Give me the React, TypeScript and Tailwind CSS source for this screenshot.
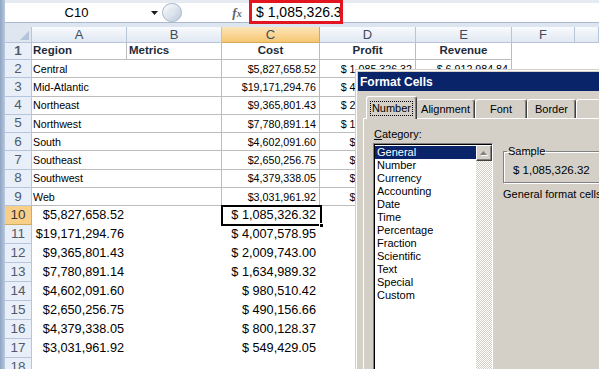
import React from 'react';

const rows = [
  ['Central', '$5,827,658.52', '$ 1,085,326.32', '$ 6,912,984.84'],
  ['Mid-Atlantic', '$19,171,294.76', '$ 4,007,578.95', '$ 23,178,873.71'],
  ['Northeast', '$9,365,801.43', '$ 2,009,743.00', '$ 11,375,544.43'],
  ['Northwest', '$7,780,891.14', '$ 1,634,989.32', '$ 9,415,880.46'],
  ['South', '$4,602,091.60', '$ 980,510.42', '$ 5,582,602.02'],
  ['Southeast', '$2,650,256.75', '$ 490,156.66', '$ 3,140,413.41'],
  ['Southwest', '$4,379,338.05', '$ 800,128.37', '$ 5,179,466.42'],
  ['Web', '$3,031,961.92', '$ 549,429.05', '$ 3,581,390.97'],
];

const categories = [
  'General', 'Number', 'Currency', 'Accounting', 'Date', 'Time',
  'Percentage', 'Fraction', 'Scientific', 'Text', 'Special', 'Custom',
];

const colHead = 'flex items-center justify-center border-r border-b border-[#b6c5d9] bg-linear-to-b from-[#f8fafd] to-[#e1e8f2] text-[13px] text-[#3d4b61]';
const colHeadOn = 'flex items-center justify-center border-r border-b border-[#d3a95c] bg-linear-to-b from-[#fce5b8] to-[#f6c772] text-[13px] text-[#3d4b61]';

function RowNum({ n, active }: { n: number; active?: boolean }) {
  return (
    <div
      className={
        active
          ? 'w-[27px] shrink-0 flex items-center justify-center border-r border-b border-[#d3a95c] bg-[#f8cf88] text-[13.5px] text-[#3a3a3a]'
          : 'w-[27px] shrink-0 flex items-center justify-center border-r border-b border-[#b6c5d9] bg-[#e9eff8] text-[13.5px] text-[#4f5b6c]'
      }
    >
      {n}
    </div>
  );
}

function FormulaBar() {
  return (
    <div className="h-[27px] flex flex-col shrink-0">
      <div className="h-[3px] bg-[#e6ebf2]" />
      <div className="h-[19px] bg-white flex items-center">
        <div className="w-[143px] text-center text-[13px] text-black">C10</div>
        <div className="w-[12px] flex justify-center">
          <svg width="7" height="4" viewBox="0 0 7 4">
            <polygon points="0,0 7,0 3.5,4" fill="#1b1b1b" />
          </svg>
        </div>
        <div className="ml-[2px] w-[20px] h-[19px] rounded-full border border-[#a7b6ca] bg-linear-to-br from-white to-[#bccadb] flex items-center justify-center">
          <div className="w-[6px] h-[6px] rounded-full bg-[#dfe6ef]" />
        </div>
        <div className="w-[47px]" />
        <div className="w-[16px] text-center font-['Liberation_Serif',serif] italic font-bold text-[13px] text-[#5c6270]">
          f<span className="text-[10px]">x</span>
        </div>
        <div className="w-[4px]" />
        <div className="relative z-10 -mt-[3px] self-start w-[94px] h-[24px] border-[3px] border-[#e3151f] bg-white overflow-hidden whitespace-nowrap pl-[4px] text-[14px] leading-[18px] text-black">
          $ 1,085,326.32
        </div>
        <div className="flex-1" />
      </div>
      <div className="h-[5px] border-t border-[#a9b8cc] bg-[#dce5f0]" />
    </div>
  );
}

function FormatCells() {
  return (
    <div className="absolute left-[355px] top-[69px] w-[260px] h-[320px] border border-[#d4d0c8] bg-[#d4d0c8] text-[11px] text-black">
      <div className="h-full border-l border-t border-white p-px flex flex-col">
        <div className="h-[19px] bg-[#0a246a] pl-[2px] flex items-center text-white font-bold text-[12px]">
          Format Cells
        </div>
        <div className="mt-[5px] ml-[5px] h-[22px] flex items-end">
          <div className="relative z-10 -mb-px ml-[3px] w-[55px] h-[23px] bg-[#d4d0c8] border-t border-l border-r border-t-white border-l-white border-r-[#404040] rounded-t-[3px] shadow-[inset_-1px_0_0_#808080] flex items-center justify-center">
            <span className="outline-1 outline-dotted outline-black px-px leading-[13px]">Number</span>
          </div>
          <div className="w-[63px] h-[19px] border-t border-r border-t-white border-r-[#404040] rounded-t-[3px] shadow-[inset_-1px_0_0_#808080] flex items-center justify-center">
            Alignment
          </div>
          <div className="w-[56px] h-[19px] border-t border-l border-r border-t-white border-l-white border-r-[#404040] rounded-t-[3px] shadow-[inset_-1px_0_0_#808080] flex items-center justify-center">
            Font
          </div>
          <div className="w-[53px] h-[19px] border-t border-l border-r border-t-white border-l-white border-r-[#404040] rounded-t-[3px] shadow-[inset_-1px_0_0_#808080] flex items-center justify-center">
            Border
          </div>
          <div className="w-[40px] h-[19px] border-t border-l border-t-white border-l-white rounded-t-[3px]" />
        </div>
        <div className="ml-[5px] flex-1 border-l border-t border-white pl-[9px] pt-[9px] flex">
          <div className="w-[120px] shrink-0">
            <div className="h-[13px] leading-[13px] pl-px">
              <span className="underline">C</span>ategory:
            </div>
            <div className="mt-[2px] h-[240px] border-t border-l border-[#808080] border-r border-r-white border-b border-b-white">
              <div className="h-full border-t border-l border-black flex">
                <div className="w-[101px] bg-white pt-px">
                  {categories.map((c, i) => (
                    <div
                      key={c}
                      className={
                        i === 0
                          ? 'h-[13px] leading-[13px] pl-[2px] bg-[#0a246a] text-white'
                          : 'h-[13px] leading-[13px] pl-[2px]'
                      }
                    >
                      {c}
                    </div>
                  ))}
                </div>
                <div className="w-[16px] flex flex-col">
                  <div className="h-[16px] bg-[#d4d0c8] border-t border-l border-white border-r border-b border-r-[#404040] border-b-[#404040] shadow-[inset_-1px_-1px_0_#808080] flex items-center justify-center">
                    <svg width="8" height="5" viewBox="0 0 8 5">
                      <polygon points="1,5 8,5 4.5,1" fill="#ffffff" />
                      <polygon points="0,4 7,4 3.5,0" fill="#808080" />
                    </svg>
                  </div>
                  <div className="flex-1 bg-[repeating-conic-gradient(#ffffff_0%_25%,#d4d0c8_0%_50%)] bg-[length:2px_2px]" />
                </div>
              </div>
            </div>
          </div>
          <div className="ml-[10px] mt-[17px] flex flex-col w-[140px] shrink-0">
            <fieldset className="border border-[#808080] shadow-[inset_1px_1px_0_#fff,1px_1px_0_#fff] px-[2px] pb-[5px]">
              <legend className="ml-px px-px leading-[13px]">Sample</legend>
              <div className="pl-[7px] mt-[6px] leading-[13px] text-[11.5px] whitespace-nowrap">$ 1,085,326.32</div>
            </fieldset>
            <div className="mt-[5px] leading-[13px] whitespace-nowrap">
              General format cells have no specific number format.
            </div>
          </div>
        </div>
      </div>
    </div>
  );
}

export default function App() {
  const line = 'border-[#bcbcbc]';
  return (
    <div className="relative w-[599px] h-[369px] overflow-hidden bg-white flex font-['Liberation_Sans',Arial,sans-serif]">
      <div className="w-[5px] shrink-0 bg-linear-to-r from-[#8ea5c3] to-[#b9c8dc]" />
      <div className="flex-1 min-w-0 flex flex-col">
        <FormulaBar />

        {/* column headers */}
        <div className="flex h-[16px] shrink-0">
          <div className="w-[27px] shrink-0 border-r border-b border-[#b6c5d9] bg-[#dfe6f0] flex items-end justify-end p-[2px]">
            <svg width="9" height="9" viewBox="0 0 9 9">
              <polygon points="9,0 9,9 0,9" fill="#b4c3d7" />
            </svg>
          </div>
          <div className={`w-[95px] shrink-0 ${colHead}`}>A</div>
          <div className={`w-[95px] shrink-0 ${colHead}`}>B</div>
          <div className={`w-[98px] shrink-0 ${colHeadOn}`}>C</div>
          <div className={`w-[96px] shrink-0 ${colHead}`}>D</div>
          <div className={`w-[96px] shrink-0 ${colHead}`}>E</div>
          <div className={`w-[63px] shrink-0 ${colHead}`}>F</div>
          <div className={`flex-1 ${colHead}`} />
        </div>

        {/* row 1 */}
        <div className="flex h-[17px] shrink-0 text-[11.5px] font-bold text-[#222b3a]">
          <RowNum n={1} />
          <div className={`w-[95px] shrink-0 border-r border-b ${line} pl-px flex items-center`}>Region</div>
          <div className={`w-[95px] shrink-0 border-r border-b ${line} pl-[2px] flex items-center`}>Metrics</div>
          <div className={`w-[98px] shrink-0 border-r border-b ${line} flex items-end justify-center`}>Cost</div>
          <div className={`w-[96px] shrink-0 border-r border-b ${line} flex items-end justify-center`}>Profit</div>
          <div className={`w-[96px] shrink-0 border-r border-b ${line} flex items-end justify-center`}>Revenue</div>
          <div className="flex-1" />
        </div>

        {/* rows 2-9 */}
        {rows.map((r, i) => (
          <div key={r[0]} className="flex h-[18.3px] shrink-0 text-[10.7px] text-black">
            <RowNum n={i + 2} />
            <div className={`w-[190px] shrink-0 border-r border-b ${line} pl-px flex items-center`}>{r[0]}</div>
            <div className={`w-[98px] shrink-0 border-r border-b ${line} pr-[3px] flex items-center justify-end`}>{r[1]}</div>
            <div className={`w-[96px] shrink-0 border-r border-b ${line} pr-[3px] flex items-center justify-end`}>{r[2]}</div>
            <div className={`w-[96px] shrink-0 border-r border-b ${line} pr-[3px] flex items-center justify-end`}>{r[3]}</div>
            <div className="flex-1" />
          </div>
        ))}

        {/* rows 10-17 */}
        {rows.map((r, i) => (
          <div key={'v' + r[0]} className="flex h-[19px] shrink-0 text-[12.7px] text-black">
            <RowNum n={i + 10} active={i === 0} />
            <div className="w-[95px] shrink-0 pr-[3px] flex items-center justify-end">{r[1]}</div>
            <div className="w-[95px] shrink-0" />
            <div className="relative w-[98px] shrink-0 pr-[4px] flex items-center justify-end">
              {r[2]}
              {i === 0 && (
                <>
                  <div className="absolute -left-px -top-px -right-[2px] -bottom-px border-2 border-black" />
                  <div className="absolute -right-[4px] -bottom-[3px] w-[5px] h-[5px] bg-black border border-white" />
                </>
              )}
            </div>
            <div className="flex-1" />
          </div>
        ))}

        <div className="flex h-[19px] shrink-0">
          <RowNum n={18} />
          <div className="flex-1" />
        </div>
      </div>

      <FormatCells />
    </div>
  );
}
